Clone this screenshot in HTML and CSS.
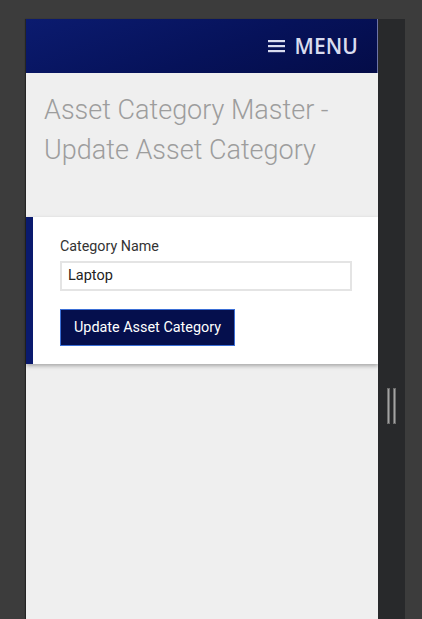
FILE: index.html
```html
<!DOCTYPE html>
<html>
<head>
<meta charset="utf-8">
<link rel="stylesheet" href="styles.css">
</head>
<body>
<div class="stage">
  <div class="frame">
    <header class="topbar">
      <div class="menu">
        <svg class="burger" width="17" height="14" viewBox="0 0 17 14"><rect x="0" y="1" width="17" height="2.2" fill="#d9dcef"/><rect x="0" y="6" width="17" height="2.2" fill="#d9dcef"/><rect x="0" y="11" width="17" height="2.2" fill="#d9dcef"/></svg>
        <span>MENU</span>
      </div>
    </header>
    <h1 class="title">Asset Category Master - Update Asset Category</h1>
    <section class="card">
      <label class="label">Category Name</label>
      <div class="input">Laptop</div>
      <button class="btn">Update Asset Category</button>
    </section>
  </div>
  <div class="strip">
    <div class="handle"><i></i><i></i></div>
  </div>
</div>
</body>
</html>
```
FILE: styles.css
```css
html, body { margin: 0; padding: 0; }
body { background: #3c3c3c; height: 619px; overflow: hidden; font-family: Roboto, "Liberation Sans", sans-serif; }
.stage { display: flex; padding: 19px 0 0 26px; height: 600px; }
.frame { width: 352px; background: #efefef; height: 600px; box-shadow: -1px 0 1px rgba(0,0,0,0.4); }
.strip { width: 27px; background: #28292b; height: 600px; display: flex; justify-content: center; }
.handle { margin-top: 369px; display: flex; gap: 3px; height: 36px; }
.handle i { display: block; width: 3px; height: 36px; background: #a3a3a3; border: 0.5px solid #6c6c6c; box-sizing: border-box; }
.topbar { height: 54px; background: linear-gradient(160deg, #0b1b6f 0%, #06125a 55%, #040c48 100%); display: flex; justify-content: flex-end; align-items: center; padding-right: 19px; border-right: 1px solid #6d74a6; }
.menu { display: flex; align-items: center; gap: 9px; color: #d9dcef; font-family: "Open Sans", sans-serif; font-size: 21px; font-weight: 600; letter-spacing: 0.1px; margin-top: -1px; }
.burger { display: block; }
.title { margin: 0; padding: 17px 30px 47px 18px; font-family: Roboto, sans-serif; font-weight: 300; font-size: 27px; line-height: 40px; color: #9d9d9d; }
.card { background: #fff; border-left: 7px solid #0a1a6e; padding: 19px 26px 18px 27px; box-shadow: 0 2px 4px rgba(0,0,0,0.3); display: flex; flex-direction: column; align-items: flex-start; }
.label { font-size: 14.3px; line-height: 20px; color: #333; }
.input { margin-top: 5px; box-sizing: border-box; width: 292px; height: 30px; border: 2px solid #e4e4e4; padding: 0 6px; font-size: 14.5px; line-height: 26px; color: #222; }
.btn { margin-top: 18px; height: 37px; width: 175px; background: #050f4d; border: 1px solid #3b6fd6; color: #fff; font-family: Roboto, sans-serif; font-size: 14.4px; padding: 0; cursor: pointer; }
```
